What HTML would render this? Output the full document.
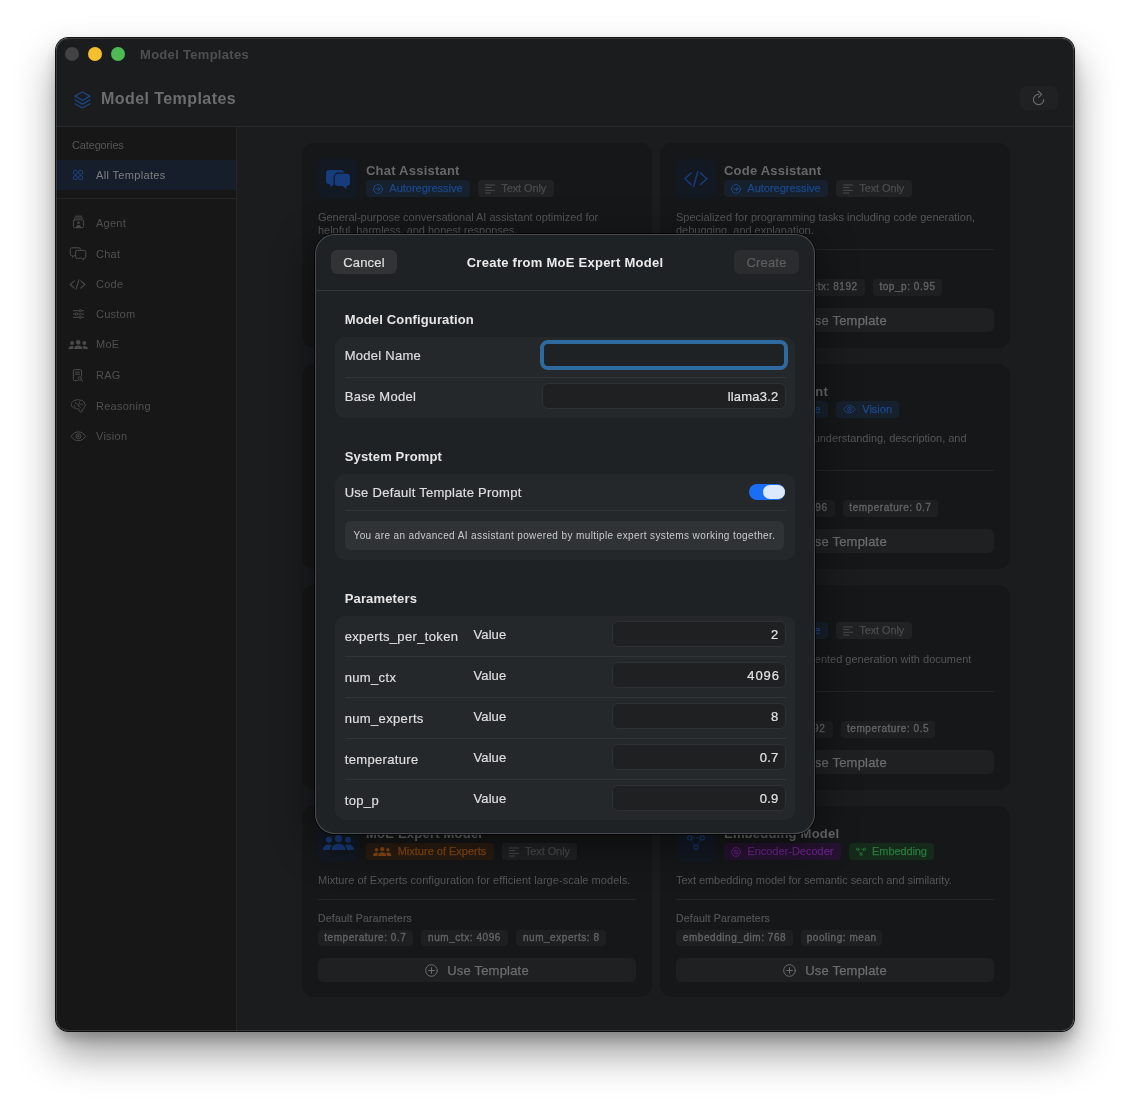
<!DOCTYPE html>
<html lang="en">
<head>
<meta charset="utf-8">
<title>Model Templates</title>
<style>
*{box-sizing:border-box;margin:0;padding:0}
html,body{width:1130px;height:1105px;background:#fff;overflow:hidden}
body{font-family:"Liberation Sans",sans-serif;position:relative;-webkit-font-smoothing:antialiased}
.abs{position:absolute}
.t{position:absolute;white-space:nowrap;line-height:1}
#shadow{position:absolute;left:56px;top:38px;width:1018px;height:993px;border-radius:12.500px;
  box-shadow:0 0 0 1px rgba(0,0,0,.92),0 22px 40px rgba(0,0,0,.4),0 8px 12px rgba(0,0,0,.2)}
#win{transform:translateZ(0);position:absolute;left:56px;top:38px;width:1018px;height:993px;border-radius:12.500px;background:#1b1c1e;overflow:hidden}
#winborder{position:absolute;left:56px;top:38px;width:1018px;height:993px;border-radius:12.500px;border:1px solid rgba(255,255,255,.13);pointer-events:none}
/* coordinates inside #win are page coords minus (56,38) — use wrapper shifted */
#page{will-change:transform;position:absolute;left:-56px;top:-38px;width:1130px;height:1105px}
.tl{position:absolute;top:47px;width:14px;height:14px;border-radius:50%}
#sidebar{position:absolute;left:56px;top:127px;width:180px;height:904px;background:#171717}
.sbt{font-size:11px;color:#505050;left:96px;letter-spacing:.25px}
/* cards */
.card{position:absolute;width:350px;border-radius:12px;background:#161718}
.ibox{position:absolute;left:16px;top:16px;width:40px;height:40px;border-radius:8px;background:#131923;display:flex;align-items:center;justify-content:center}
.ctitle{left:64px;top:21px;font-size:13px;font-weight:bold;color:#676869;letter-spacing:.22px}
.tags{position:absolute;left:64px;top:37px;height:17px;display:flex;gap:8px}
.tag{-webkit-text-stroke:.25px currentColor;height:17px;border-radius:4px;padding:0 7.300px 0 7.300px;display:flex;align-items:center;gap:6px;font-size:11px;line-height:17px;white-space:nowrap;letter-spacing:0}
.tag.blue{background:#17202d;color:#1b4887}
.tag.gray{background:#212223;color:#4a4b4c;letter-spacing:-.1px}
.tag.orange{background:#2a1d12;color:#8a4a12}
.tag.purple{background:#261330;color:#6b2388}
.tag.green{background:#152a1b;color:#2a7a3a;letter-spacing:-.1px}
.tag svg{display:block;flex:none}
.desc{position:absolute;left:16px;top:68px;font-size:11px;line-height:13px;color:#555657;white-space:nowrap;letter-spacing:.02px}
.cdiv{position:absolute;left:16px;width:318px;height:1px;background:#242527}
.l2 .cdiv{top:106px}.l1 .cdiv{top:93px}
.dp{-webkit-text-stroke:.2px currentColor;left:16px;font-size:10.500px;color:#535455;letter-spacing:.2px}
.l2 .dp{top:120.300px}.l1 .dp{top:107px}
.chips{position:absolute;left:16px;height:16px;display:flex;gap:8px}
.l2 .chips{top:136.300px}.l1 .chips{top:124px}
.chip{height:16.400px;border-radius:4px;background:#1e1f20;color:#626364;font-size:10px;font-weight:normal;-webkit-text-stroke:.35px currentColor;line-height:16px;text-align:center;white-space:nowrap;letter-spacing:.55px;flex:none}
.ubtn{-webkit-text-stroke:.25px currentColor;position:absolute;left:16px;width:318px;height:24px;border-radius:6px;background:#1f2021;color:#6c6d6e;font-size:13px;display:flex;align-items:center;justify-content:center;gap:9px;letter-spacing:.2px}
.l2 .ubtn{top:165px}.l1 .ubtn{top:152px}
.ubtn svg{display:block;flex:none}
/* modal */
#minner{position:absolute;left:1px;top:0;width:500px;height:600px}
#mshadow{position:absolute;left:315px;top:234px;width:500px;height:599.500px;border-radius:20px;box-shadow:0 0 0 1px rgba(0,0,0,.75),0 10px 38px 5px rgba(0,0,0,.42)}
#modal{will-change:transform;position:absolute;left:315px;top:234px;width:500px;height:599.500px;border-radius:20px;background:#1f2224;overflow:hidden;box-shadow:inset 0 0 0 1px #484a4d}
.mbtn{-webkit-text-stroke:.2px currentColor;position:absolute;height:24px;border-radius:6px;font-size:13px;line-height:26px;text-align:center;letter-spacing:.2px}
.sec{left:28.700px;font-size:13px;font-weight:bold;color:#e6e6e7;letter-spacing:.15px}
.grp{position:absolute;left:19.300px;width:459.500px;border-radius:10px;background:#25282a}
.lab{-webkit-text-stroke:.2px currentColor;left:28.700px;font-size:13px;color:#dfdfe0;letter-spacing:.27px}
.pv{left:157.500px;letter-spacing:.1px}
.pn{letter-spacing:.35px}
.rdiv{position:absolute;left:29px;width:441px;height:1px;background:#323537}
.inp{-webkit-text-stroke:.2px currentColor;position:absolute;border-radius:6px;background:#1e2022;border:1px solid #2e3133;color:#e4e4e5;font-size:13px;text-align:right;padding-right:6.600px;line-height:24px;letter-spacing:.2px}
.pi{left:296px;width:174px;height:26px;margin-top:-1px;padding-top:1px}
.focus{border-radius:8px;border:4px solid #2e6a9f;background:#1f2224}
</style>
</head>
<body>
<div id="shadow"></div>
<div id="win"><div id="page">

<!-- title bar -->
<div class="tl" style="left:65px;background:#424244"></div>
<div class="tl" style="left:88px;background:#f5bf2d"></div>
<div class="tl" style="left:111px;background:#4fb955"></div>
<div class="t" id="wt" style="left:140px;top:48px;font-size:13px;font-weight:bold;color:#4e4f51;letter-spacing:.3px">Model Templates</div>

<!-- header -->
<svg class="abs" style="left:73.200px;top:89.700px" width="18.800" height="19.800" viewBox="0 0 20 21" fill="none" stroke="#1b4483" stroke-width="1.300" stroke-linejoin="round" stroke-linecap="round">
  <path d="M10 2 L18 6.5 L10 11 L2 6.5 Z"/>
  <path d="M2 10.5 L10 15 L18 10.5"/>
  <path d="M2 14.5 L10 19 L18 14.5"/>
</svg>
<div class="t" id="ht" style="left:101px;top:91px;font-size:16px;font-weight:bold;color:#6d6d6e;letter-spacing:.43px">Model Templates</div>
<div class="abs" style="left:1020px;top:86px;width:38px;height:24px;border-radius:6px;background:#202123"></div>
<svg class="abs" style="left:1030px;top:89px" width="18" height="18" viewBox="0 0 18 18" fill="none" stroke="#696a6b" stroke-width="1.150" stroke-linecap="round" stroke-linejoin="round">
  <path d="M13.750 10.500 A5.150 5.150 0 1 1 8.600 5.350"/>
  <path d="M8.300 2.300 L11.600 5.400 L8.500 8.400" stroke-width="1.300"/>
</svg>
<div class="abs" style="left:56px;top:126px;width:1018px;height:1px;background:#29292b"></div>

<!-- sidebar -->
<div id="sidebar"></div>
<div class="abs" style="left:236px;top:127px;width:1px;height:904px;background:#242526"></div>
<div class="t" style="left:72px;top:140px;font-size:11px;color:#565656;letter-spacing:-.15px">Categories</div>
<div class="abs" style="left:56px;top:160px;width:180px;height:30px;background:#171e2b"></div>
<div class="t" style="left:96px;top:170px;font-size:11px;color:#7d7e80;letter-spacing:.34px">All Templates</div>
<div class="abs" style="left:56px;top:198px;width:180px;height:1px;background:#242526"></div>

<div class="t sbt" style="top:218px">Agent</div>
<div class="t sbt" style="top:249px">Chat</div>
<div class="t sbt" style="top:279px">Code</div>
<div class="t sbt" style="top:309px">Custom</div>
<div class="t sbt" style="top:339px">MoE</div>
<div class="t sbt" style="top:370px">RAG</div>
<div class="t sbt" style="top:401px">Reasoning</div>
<div class="t sbt" style="top:431px">Vision</div>


<!-- sidebar icons -->
<svg class="abs" style="left:73px;top:170px" width="10" height="10" viewBox="0 0 10 10" fill="none" stroke="#1c4482" stroke-width="1"><rect x=".5" y=".5" width="3.700" height="3.700" rx=".8"/><rect x="5.800" y=".5" width="3.700" height="3.700" rx=".8"/><rect x=".5" y="5.800" width="3.700" height="3.700" rx=".8"/><rect x="5.800" y="5.800" width="3.700" height="3.700" rx=".8"/></svg>
<svg class="abs" style="left:72px;top:215px" width="13" height="14" viewBox="0 0 13 14" fill="none" stroke="#4a4a4b" stroke-width="1" stroke-linecap="round"><path d="M3.300 1.200h6.400M2.400 3h8.200"/><rect x="1.400" y="4.800" width="10.200" height="7.900" rx="1.200"/><circle cx="6.500" cy="7.700" r="1.300" fill="#4a4a4b" stroke="none"/><path d="M3.900 12.500c.3-1.700 1.300-2.500 2.600-2.500s2.300.8 2.600 2.500z" fill="#4a4a4b" stroke="none"/></svg>
<svg class="abs" style="left:69px;top:247px" width="18" height="14" viewBox="0 0 18 14" fill="none" stroke="#4a4a4b" stroke-width="1" stroke-linejoin="round"><path d="M6.300 8.600H5.200L3.400 10.200V8.600H2.800A1.600 1.600 0 0 1 1.200 7V2.400A1.600 1.600 0 0 1 2.800.8h7A1.600 1.600 0 0 1 11.400 2.400v.7"/><path d="M8.200 3.400h7A1.600 1.600 0 0 1 16.800 5v4.700a1.600 1.600 0 0 1-1.600 1.600h-.6v1.700l-1.900-1.700H8.200A1.600 1.600 0 0 1 6.600 9.700V5A1.600 1.600 0 0 1 8.200 3.400z"/></svg>
<svg class="abs" style="left:69px;top:279px" width="17" height="11" viewBox="0 0 17 11" fill="none" stroke="#4a4a4b" stroke-width="1.100" stroke-linecap="round" stroke-linejoin="round"><path d="M5.200 1.800L1.200 5.500l4 3.700M11.800 1.800l4 3.700-4 3.700M9.900.9L7.100 10.100"/></svg>
<svg class="abs" style="left:72px;top:309px" width="13" height="10" viewBox="0 0 13 10" fill="none" stroke="#4a4a4b" stroke-width="1" stroke-linecap="round"><path d="M1.300 1.700h10.400M1.300 5h10.400M1.300 8.300h10.400"/><circle cx="8.200" cy="1.700" r="1.200" fill="#171717"/><circle cx="4.500" cy="5" r="1.200" fill="#171717"/><circle cx="8.200" cy="8.300" r="1.200" fill="#171717"/></svg>
<svg class="abs" style="left:67.800px;top:339.600px" width="20.400" height="9.600" viewBox="0 0 31 15" fill="#4a4a4b"><circle cx="15.500" cy="3.700" r="3.600"/><path d="M8.700 15c-.3-3.600 2.600-6.300 6.800-6.300s7.100 2.700 6.800 6.300z"/><circle cx="5.900" cy="4.700" r="3"/><path d="M.5 15C-.6 12.100 2 9.400 5.700 9.400c1.300 0 2.500.4 3.400 1C7.700 11.600 7 13.200 7 15z"/><circle cx="25.100" cy="4.700" r="3"/><path d="M30.500 15c1.100-2.900-1.500-5.600-5.200-5.600-1.300 0-2.500.4-3.400 1 1.400 1.200 2.100 2.800 2.100 4.600z"/></svg>
<svg class="abs" style="left:72px;top:369px" width="12" height="13" viewBox="0 0 12 13" fill="none" stroke="#4a4a4b" stroke-width="1" stroke-linecap="round"><path d="M5.600 11.600H2.600A1.300 1.300 0 0 1 1.300 10.300V1.900A1.300 1.300 0 0 1 2.600.6h5.600a1.300 1.300 0 0 1 1.300 1.300v5"/><path d="M3.300 3.200h4.200M3.300 5.300h4.200"/><circle cx="7.800" cy="9.400" r="1.700"/><path d="M9.100 10.700l1.700 1.600"/></svg>
<svg class="abs" style="left:70px;top:399px" width="16" height="14" viewBox="0 0 16 14" fill="none" stroke="#4a4a4b" stroke-width="1" stroke-linecap="round" stroke-linejoin="round"><path d="M5.200 1.300C6.500.5 8.600.5 10 1.200c2.200-.2 4 1 4.400 2.900 1.100 1.100 1 3-.2 4.100.2 1.700-1.300 2.300-2.300 2.200l.2 2.300c-.9.600-2.300.3-2.800-.8l-.6-2.200c-1.400.4-2.900.2-3.800-.7C2.800 9 1.300 7.700 1.500 5.900.8 4.100 2.500 1.600 5.200 1.300z"/><path d="M5.200 3.400c.2 1.200 1 1.900 2.200 1.900M9.700 2.800L8.300 7c1 .1 2 .7 2.200 1.700M10.600 5.100c.9-.3 1.800 0 2.300.8M4.300 6.300c-.1.700.2 1.300.9 1.600"/></svg>
<svg class="abs" style="left:70px;top:431px" width="17" height="11" viewBox="0 0 17 11" fill="none" stroke="#4a4a4b" stroke-width="1"><path d="M1.200 5.300C3 2.300 5.600.9 8.400.9s5.400 1.400 7.200 4.400c-1.800 3-4.400 4.400-7.200 4.400S3 8.300 1.200 5.300z"/><circle cx="8.400" cy="5.300" r="2.500"/><circle cx="8.400" cy="5.300" r="1.100" fill="#4a4a4b" stroke="none"/></svg>

<!-- CARDS -->
<div class="card l2" style="left:302px;top:143px;height:204.5px">
 <div class="ibox"><svg class="ci" style="margin-top:1.500px" viewBox="0 0 24 20" width="24" height="20"><path fill="#173c7b" d="M3.400 0h11.400a3.400 3.400 0 0 1 3.400 3.400v7.400a3.400 3.400 0 0 1-3.400 3.400H8.200L4.300 17.200V14.200H3.400A3.400 3.400 0 0 1 0 10.800V3.400A3.400 3.400 0 0 1 3.400 0z"/><path fill="#173c7b" stroke="#131923" stroke-width="2.400" paint-order="stroke" d="M12 3.800h8.600A3.300 3.300 0 0 1 23.900 7.100v5.700a3.300 3.300 0 0 1-3.300 3.300h-.2v3.200L16.800 16.100H12A3.300 3.300 0 0 1 8.700 12.800V7.100A3.300 3.300 0 0 1 12 3.800z"/></svg></div>
 <div class="t ctitle">Chat Assistant</div>
 <div class="tags"><span class="tag blue"><svg class="ti" width="10" height="10" viewBox="0 0 10 10" fill="none" stroke="currentColor" stroke-width="1" stroke-linecap="round" stroke-linejoin="round"><circle cx="5" cy="5" r="4.400"/><path d="M2.800 5h4.200M5.400 3.200l1.800 1.800-1.800 1.800"/></svg><span>Autoregressive</span></span><span class="tag gray"><svg class="ti" width="10" height="10" viewBox="0 0 10 10" fill="none" stroke="currentColor" stroke-width="1" stroke-linecap="round"><path d="M.5 1h9.100M.5 3.600h5.400M.5 6.300h9.100M.5 9h5.100"/></svg><span>Text Only</span></span></div>
 <div class="desc" style="letter-spacing:-0.03px">General-purpose conversational AI assistant optimized for<br>helpful, harmless, and honest responses.</div>
 <div class="cdiv"></div>
 <div class="t dp">Default Parameters</div>
 <div class="chips"><span class="chip" style="width:94.6px">temperature: 0.7</span><span class="chip" style="width:63.3px">top_p: 0.9</span><span class="chip" style="width:87.8px">num_ctx: 4096</span></div>
 <div class="ubtn"><svg width="13" height="13" viewBox="0 0 13 13" fill="none" stroke="currentColor" stroke-width="1" stroke-linecap="round"><circle cx="6.500" cy="6.500" r="5.800"/><path d="M6.500 3.700v5.600M3.700 6.500h5.600"/></svg><span>Use Template</span></div>
</div>
<div class="card l2" style="left:660px;top:143px;height:204.5px">
 <div class="ibox"><svg class="ci" viewBox="0 0 24 16" width="24" height="16" fill="none" stroke="#173c7b" stroke-width="1.500" stroke-linecap="round" stroke-linejoin="round"><path d="M7.100 2L.9 7.800l6.200 5.700M16.600 2l6.200 5.800-6.200 5.700M13.800.7L9.600 15.500"/></svg></div>
 <div class="t ctitle">Code Assistant</div>
 <div class="tags"><span class="tag blue"><svg class="ti" width="10" height="10" viewBox="0 0 10 10" fill="none" stroke="currentColor" stroke-width="1" stroke-linecap="round" stroke-linejoin="round"><circle cx="5" cy="5" r="4.400"/><path d="M2.800 5h4.200M5.400 3.200l1.800 1.800-1.800 1.800"/></svg><span>Autoregressive</span></span><span class="tag gray"><svg class="ti" width="10" height="10" viewBox="0 0 10 10" fill="none" stroke="currentColor" stroke-width="1" stroke-linecap="round"><path d="M.5 1h9.100M.5 3.600h5.400M.5 6.300h9.100M.5 9h5.100"/></svg><span>Text Only</span></span></div>
 <div class="desc" style="letter-spacing:-0.02px">Specialized for programming tasks including code generation,<br>debugging, and explanation.</div>
 <div class="cdiv"></div>
 <div class="t dp">Default Parameters</div>
 <div class="chips"><span class="chip" style="width:93.4px">temperature: 0.2</span><span class="chip" style="width:87.8px">num_ctx: 8192</span><span class="chip" style="width:68.6px">top_p: 0.95</span></div>
 <div class="ubtn"><svg width="13" height="13" viewBox="0 0 13 13" fill="none" stroke="currentColor" stroke-width="1" stroke-linecap="round"><circle cx="6.500" cy="6.500" r="5.800"/><path d="M6.500 3.700v5.600M3.700 6.500h5.600"/></svg><span>Use Template</span></div>
</div>
<div class="card l2" style="left:302px;top:364px;height:204.5px">
 <div class="ibox"><svg class="ci" style="margin-top:1.500px" viewBox="0 0 24 20" width="24" height="20"><path fill="#173c7b" d="M3.400 0h11.400a3.400 3.400 0 0 1 3.400 3.400v7.400a3.400 3.400 0 0 1-3.400 3.400H8.200L4.300 17.200V14.200H3.400A3.400 3.400 0 0 1 0 10.800V3.400A3.400 3.400 0 0 1 3.400 0z"/><path fill="#173c7b" stroke="#131923" stroke-width="2.400" paint-order="stroke" d="M12 3.800h8.600A3.300 3.300 0 0 1 23.900 7.100v5.700a3.300 3.300 0 0 1-3.300 3.300h-.2v3.200L16.800 16.100H12A3.300 3.300 0 0 1 8.700 12.800V7.100A3.300 3.300 0 0 1 12 3.800z"/></svg></div>
 <div class="t ctitle">Reasoning Model</div>
 <div class="tags"><span class="tag blue"><svg class="ti" width="10" height="10" viewBox="0 0 10 10" fill="none" stroke="currentColor" stroke-width="1" stroke-linecap="round" stroke-linejoin="round"><circle cx="5" cy="5" r="4.400"/><path d="M2.800 5h4.200M5.400 3.200l1.800 1.800-1.800 1.800"/></svg><span>Autoregressive</span></span><span class="tag gray"><svg class="ti" width="10" height="10" viewBox="0 0 10 10" fill="none" stroke="currentColor" stroke-width="1" stroke-linecap="round"><path d="M.5 1h9.100M.5 3.600h5.400M.5 6.300h9.100M.5 9h5.100"/></svg><span>Text Only</span></span></div>
 <div class="desc" style="letter-spacing:0px">Step-by-step reasoning model for complex analytical problem<br>solving and planning.</div>
 <div class="cdiv"></div>
 <div class="t dp">Default Parameters</div>
 <div class="chips"><span class="chip" style="width:94.6px">temperature: 0.6</span><span class="chip" style="width:87.8px">num_ctx: 8192</span></div>
 <div class="ubtn"><svg width="13" height="13" viewBox="0 0 13 13" fill="none" stroke="currentColor" stroke-width="1" stroke-linecap="round"><circle cx="6.500" cy="6.500" r="5.800"/><path d="M6.500 3.700v5.600M3.700 6.500h5.600"/></svg><span>Use Template</span></div>
</div>
<div class="card l2" style="left:660px;top:364px;height:204.5px">
 <div class="ibox"><svg class="ci" viewBox="0 0 24 16" width="24" height="16" fill="none" stroke="#173c7b" stroke-width="1.600"><path d="M1 8c3-5 7-7 11-7s8 2 11 7c-3 5-7 7-11 7S4 13 1 8z"/><circle cx="12" cy="8" r="3.500"/></svg></div>
 <div class="t ctitle">Vision Assistant</div>
 <div class="tags"><span class="tag blue"><svg class="ti" width="10" height="10" viewBox="0 0 10 10" fill="none" stroke="currentColor" stroke-width="1" stroke-linecap="round" stroke-linejoin="round"><circle cx="5" cy="5" r="4.400"/><path d="M2.800 5h4.200M5.400 3.200l1.800 1.800-1.800 1.800"/></svg><span>Autoregressive</span></span><span class="tag blue"><svg class="ti" width="13" height="8.400" viewBox="0 0 14 9" fill="none" stroke="currentColor" stroke-width="1"><path d="M.7 4.500C2.500 1.800 4.600.6 7 .6s4.500 1.200 6.300 3.900C11.500 7.200 9.400 8.400 7 8.400S2.500 7.200.7 4.500z"/><circle cx="7" cy="4.500" r="2.100"/><circle cx="7" cy="4.500" r=".9" fill="currentColor" stroke="none"/></svg><span>Vision</span></span></div>
 <div class="desc" style="letter-spacing:-0.02px">Multimodal model for image understanding, description, and<br>analysis.</div>
 <div class="cdiv"></div>
 <div class="t dp">Default Parameters</div>
 <div class="chips"><span class="chip" style="width:63.3px">top_p: 0.9</span><span class="chip" style="width:87.8px">num_ctx: 4096</span><span class="chip" style="width:94.6px">temperature: 0.7</span></div>
 <div class="ubtn"><svg width="13" height="13" viewBox="0 0 13 13" fill="none" stroke="currentColor" stroke-width="1" stroke-linecap="round"><circle cx="6.500" cy="6.500" r="5.800"/><path d="M6.500 3.700v5.600M3.700 6.500h5.600"/></svg><span>Use Template</span></div>
</div>
<div class="card l2" style="left:302px;top:585px;height:204.5px">
 <div class="ibox"><svg class="ci" style="margin-top:1.500px" viewBox="0 0 24 20" width="24" height="20"><path fill="#173c7b" d="M3.400 0h11.400a3.400 3.400 0 0 1 3.400 3.400v7.400a3.400 3.400 0 0 1-3.400 3.400H8.200L4.300 17.200V14.200H3.400A3.400 3.400 0 0 1 0 10.800V3.400A3.400 3.400 0 0 1 3.400 0z"/><path fill="#173c7b" stroke="#131923" stroke-width="2.400" paint-order="stroke" d="M12 3.800h8.600A3.300 3.300 0 0 1 23.900 7.100v5.700a3.300 3.300 0 0 1-3.300 3.300h-.2v3.200L16.800 16.100H12A3.300 3.300 0 0 1 8.700 12.800V7.100A3.300 3.300 0 0 1 12 3.800z"/></svg></div>
 <div class="t ctitle">Agent Model</div>
 <div class="tags"><span class="tag blue"><svg class="ti" width="10" height="10" viewBox="0 0 10 10" fill="none" stroke="currentColor" stroke-width="1" stroke-linecap="round" stroke-linejoin="round"><circle cx="5" cy="5" r="4.400"/><path d="M2.800 5h4.200M5.400 3.200l1.800 1.800-1.800 1.800"/></svg><span>Autoregressive</span></span><span class="tag gray"><svg class="ti" width="10" height="10" viewBox="0 0 10 10" fill="none" stroke="currentColor" stroke-width="1" stroke-linecap="round"><path d="M.5 1h9.100M.5 3.600h5.400M.5 6.300h9.100M.5 9h5.100"/></svg><span>Text Only</span></span></div>
 <div class="desc" style="letter-spacing:0px">Autonomous agent configuration with tool use and function<br>calling support.</div>
 <div class="cdiv"></div>
 <div class="t dp">Default Parameters</div>
 <div class="chips"><span class="chip" style="width:94.6px">temperature: 0.4</span><span class="chip" style="width:87.8px">num_ctx: 8192</span></div>
 <div class="ubtn"><svg width="13" height="13" viewBox="0 0 13 13" fill="none" stroke="currentColor" stroke-width="1" stroke-linecap="round"><circle cx="6.500" cy="6.500" r="5.800"/><path d="M6.500 3.700v5.600M3.700 6.500h5.600"/></svg><span>Use Template</span></div>
</div>
<div class="card l2" style="left:660px;top:585px;height:204.5px">
 <div class="ibox"><svg class="ci" viewBox="0 0 24 16" width="24" height="16" fill="none" stroke="#173c7b" stroke-width="1.500" stroke-linecap="round" stroke-linejoin="round"><path d="M7.100 2L.9 7.800l6.200 5.700M16.600 2l6.200 5.800-6.200 5.700M13.800.7L9.600 15.500"/></svg></div>
 <div class="t ctitle">RAG Model</div>
 <div class="tags"><span class="tag blue"><svg class="ti" width="10" height="10" viewBox="0 0 10 10" fill="none" stroke="currentColor" stroke-width="1" stroke-linecap="round" stroke-linejoin="round"><circle cx="5" cy="5" r="4.400"/><path d="M2.800 5h4.200M5.400 3.200l1.800 1.800-1.800 1.800"/></svg><span>Autoregressive</span></span><span class="tag gray"><svg class="ti" width="10" height="10" viewBox="0 0 10 10" fill="none" stroke="currentColor" stroke-width="1" stroke-linecap="round"><path d="M.5 1h9.100M.5 3.600h5.400M.5 6.300h9.100M.5 9h5.100"/></svg><span>Text Only</span></span></div>
 <div class="desc" style="letter-spacing:0px">Optimized for retrieval-augmented generation with document<br>context.</div>
 <div class="cdiv"></div>
 <div class="t dp">Default Parameters</div>
 <div class="chips"><span class="chip" style="width:61px">top_k: 40</span><span class="chip" style="width:87.8px">num_ctx: 8192</span><span class="chip" style="width:94.6px">temperature: 0.5</span></div>
 <div class="ubtn"><svg width="13" height="13" viewBox="0 0 13 13" fill="none" stroke="currentColor" stroke-width="1" stroke-linecap="round"><circle cx="6.500" cy="6.500" r="5.800"/><path d="M6.500 3.700v5.600M3.700 6.500h5.600"/></svg><span>Use Template</span></div>
</div>
<div class="card l1" style="left:302px;top:806px;height:191px">
 <div class="ibox"><svg class="ci" viewBox="0 0 31 15" width="31" height="15" fill="#173c7b"><circle cx="15.500" cy="3.700" r="3.600"/><path d="M8.700 15c-.3-3.600 2.600-6.300 6.800-6.300s7.100 2.700 6.800 6.300z"/><circle cx="5.900" cy="4.700" r="3"/><path d="M.5 15C-.6 12.100 2 9.400 5.700 9.400c1.300 0 2.500.4 3.400 1C7.700 11.600 7 13.200 7 15z"/><circle cx="25.100" cy="4.700" r="3"/><path d="M30.500 15c1.100-2.900-1.500-5.600-5.200-5.600-1.300 0-2.500.4-3.400 1 1.400 1.200 2.100 2.800 2.100 4.600z"/></svg></div>
 <div class="t ctitle">MoE Expert Model</div>
 <div class="tags"><span class="tag orange"><svg class="ti" width="18.400" height="8.900" viewBox="0 0 31 15" fill="currentColor"><circle cx="15.500" cy="3.700" r="3.600"/><path d="M8.700 15c-.3-3.600 2.600-6.300 6.800-6.300s7.100 2.700 6.800 6.300z"/><circle cx="5.900" cy="4.700" r="3"/><path d="M.5 15C-.6 12.100 2 9.400 5.700 9.400c1.300 0 2.500.4 3.400 1C7.700 11.600 7 13.200 7 15z"/><circle cx="25.100" cy="4.700" r="3"/><path d="M30.500 15c1.100-2.900-1.500-5.600-5.200-5.600-1.300 0-2.500.4-3.400 1 1.400 1.200 2.100 2.800 2.100 4.600z"/></svg><span>Mixture of Experts</span></span><span class="tag gray"><svg class="ti" width="10" height="10" viewBox="0 0 10 10" fill="none" stroke="currentColor" stroke-width="1" stroke-linecap="round"><path d="M.5 1h9.100M.5 3.600h5.400M.5 6.300h9.100M.5 9h5.100"/></svg><span>Text Only</span></span></div>
 <div class="desc" style="letter-spacing:0.04px">Mixture of Experts configuration for efficient large-scale models.</div>
 <div class="cdiv"></div>
 <div class="t dp">Default Parameters</div>
 <div class="chips"><span class="chip" style="width:94.6px">temperature: 0.7</span><span class="chip" style="width:87.8px">num_ctx: 4096</span><span class="chip" style="width:89.7px">num_experts: 8</span></div>
 <div class="ubtn"><svg width="13" height="13" viewBox="0 0 13 13" fill="none" stroke="currentColor" stroke-width="1" stroke-linecap="round"><circle cx="6.500" cy="6.500" r="5.800"/><path d="M6.500 3.700v5.600M3.700 6.500h5.600"/></svg><span>Use Template</span></div>
</div>
<div class="card l1" style="left:660px;top:806px;height:191px">
 <div class="ibox"><svg class="ci" viewBox="0 0 18 15" width="18" height="15" fill="none" stroke="#173c7b" stroke-width="1.100"><circle cx="2.800" cy="2.900" r="2.100"/><circle cx="15.200" cy="2.900" r="2.100"/><circle cx="9" cy="12" r="2.100"/><path d="M5.300 2.900h7.400M4.200 5l3.500 5.100M13.800 5l-3.500 5.100" stroke-dasharray="0.100 2" stroke-linecap="round"/></svg></div>
 <div class="t ctitle">Embedding Model</div>
 <div class="tags"><span class="tag purple"><svg class="ti" width="10" height="10" viewBox="0 0 10 10" fill="none" stroke="currentColor" stroke-width=".9" stroke-linecap="round" stroke-linejoin="round"><circle cx="5" cy="5" r="4.400"/><path d="M7.200 3.800H2.900M4 2.700L2.900 3.800 4 4.900M2.800 6.200h4.300M6 5.100l1.100 1.100L6 7.300"/></svg><span>Encoder-Decoder</span></span><span class="tag green"><svg class="ti" width="10" height="9.500" viewBox="0 0 18 15" fill="none" stroke="currentColor" stroke-width="1.700"><circle cx="2.800" cy="2.900" r="2"/><circle cx="15.200" cy="2.900" r="2"/><circle cx="9" cy="12" r="2"/><path d="M5.300 2.900h7.400M4.200 5l3.500 5.100M13.800 5l-3.500 5.100" stroke-dasharray="1.500 1.500"/></svg><span>Embedding</span></span></div>
 <div class="desc" style="letter-spacing:-0.06px">Text embedding model for semantic search and similarity.</div>
 <div class="cdiv"></div>
 <div class="t dp">Default Parameters</div>
 <div class="chips"><span class="chip" style="width:117px">embedding_dim: 768</span><span class="chip" style="width:81.4px">pooling: mean</span></div>
 <div class="ubtn"><svg width="13" height="13" viewBox="0 0 13 13" fill="none" stroke="currentColor" stroke-width="1" stroke-linecap="round"><circle cx="6.500" cy="6.500" r="5.800"/><path d="M6.500 3.700v5.600M3.700 6.500h5.600"/></svg><span>Use Template</span></div>
</div>

<!-- MODAL -->
<div id="mshadow"></div>
<div id="modal"><div id="minner">
 <div class="mbtn" style="left:15px;top:16px;width:66px;background:#323335;color:#dfdfe0">Cancel</div>
 <div class="t" id="mtitle" style="left:-1px;width:500px;text-align:center;top:22px;font-size:13px;font-weight:bold;color:#ebebec;letter-spacing:.26px">Create from MoE Expert Model</div>
 <div class="mbtn" style="left:418px;top:16px;width:65px;background:#2a2c2e;color:#5d5f61">Create</div>
 <div class="abs" style="left:-1px;top:56px;width:502px;height:1px;background:#34373a"></div>

 <div class="t sec" style="top:79px">Model Configuration</div>
 <div class="grp" style="top:103px;height:81px"></div>
 <div class="t lab" style="top:115px">Model Name</div>
 <div class="abs focus" style="left:224px;top:106px;width:248px;height:30px"></div>
 <div class="rdiv" style="top:143px"></div>
 <div class="t lab" style="top:156px">Base Model</div>
 <div class="inp" style="left:226px;top:149px;width:244px;height:26px;padding-top:1px">llama3.2</div>

 <div class="t sec" style="top:216px">System Prompt</div>
 <div class="grp" style="top:240px;height:86px"></div>
 <div class="t lab" style="top:252px">Use Default Template Prompt</div>
 <div class="abs" style="left:433px;top:250px;width:36px;height:16px;border-radius:8px;background:#1a6ef4"></div>
 <div class="abs" style="left:447px;top:251px;width:21.500px;height:14px;border-radius:7px;background:#dce9fd"></div>
 <div class="rdiv" style="top:276px"></div>
 <div class="abs" style="left:29px;top:287px;width:439px;height:29px;border-radius:6px;background:#303335"></div>
 <div class="t" id="prompt" style="left:37.500px;top:296.500px;font-size:10px;color:#c9cacb;letter-spacing:.39px">You are an advanced AI assistant powered by multiple expert systems working together.</div>

 <div class="t sec" style="top:358px">Parameters</div>
 <div class="grp" style="top:382px;height:204px"></div>

 <div class="t lab pn" style="top:396px">experts_per_token</div><div class="t lab pv" style="top:394px">Value</div><div class="inp pi" style="top:388px">2</div>
 <div class="rdiv" style="top:422px"></div>
 <div class="t lab pn" style="top:437px">num_ctx</div><div class="t lab pv" style="top:435px">Value</div><div class="inp pi" style="top:429px;letter-spacing:.9px;padding-right:5.200px">4096</div>
 <div class="rdiv" style="top:463px"></div>
 <div class="t lab pn" style="top:478px">num_experts</div><div class="t lab pv" style="top:476px">Value</div><div class="inp pi" style="top:470px">8</div>
 <div class="rdiv" style="top:504px"></div>
 <div class="t lab pn" style="top:519px">temperature</div><div class="t lab pv" style="top:517px">Value</div><div class="inp pi" style="top:511px">0.7</div>
 <div class="rdiv" style="top:545px"></div>
 <div class="t lab pn" style="top:560px">top_p</div><div class="t lab pv" style="top:558px">Value</div><div class="inp pi" style="top:552px">0.9</div>
</div></div>

</div></div>
<div id="winborder"></div>
</body>
</html>
